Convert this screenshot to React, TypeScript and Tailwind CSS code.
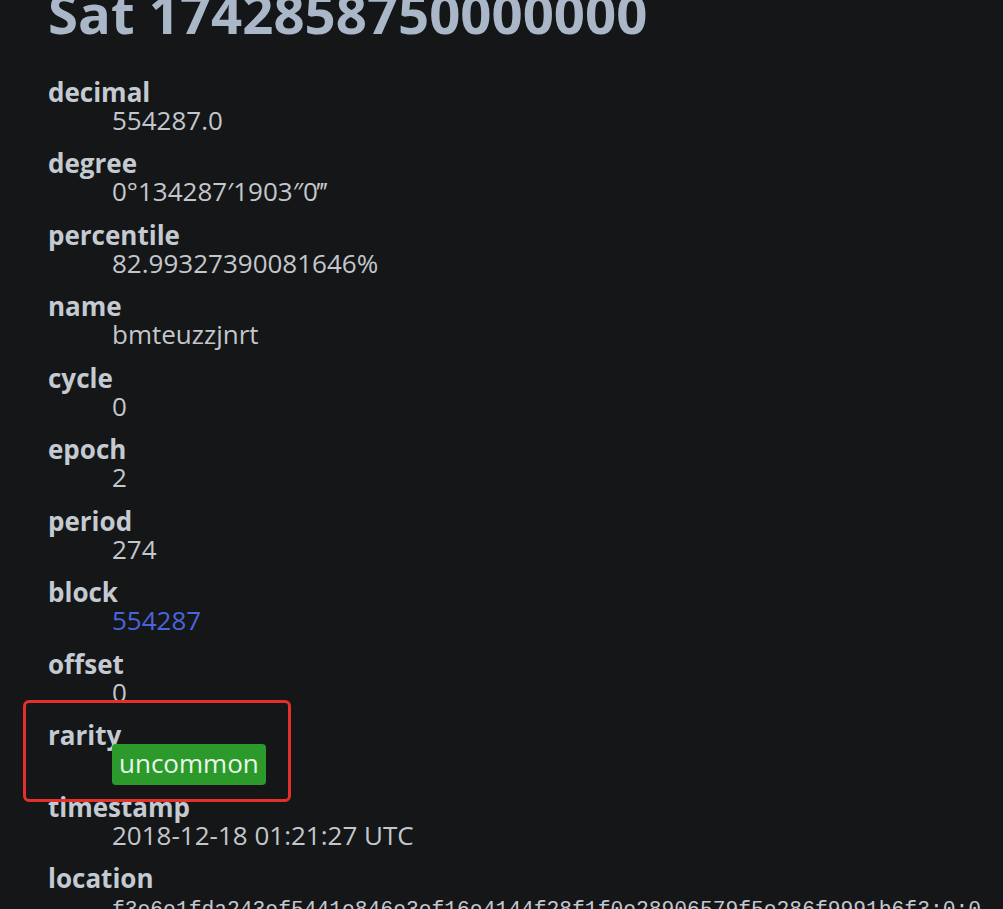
import React from "react";

const rows: { label: string; value: React.ReactNode }[] = [
  { label: "decimal", value: "554287.0" },
  { label: "degree", value: "0°134287′1903″0‴" },
  { label: "percentile", value: "82.99327390081646%" },
  { label: "name", value: "bmteuzzjnrt" },
  { label: "cycle", value: "0" },
  { label: "epoch", value: "2" },
  { label: "period", value: "274" },
  {
    label: "block",
    value: (
      <a href="#" className="text-[#4a64dc]">
        554287
      </a>
    ),
  },
  { label: "offset", value: "0" },
  {
    label: "rarity",
    value: (
      <span className="rounded-[4px] bg-[#2b9a2b] px-[7px] pt-[1px] pb-[4px] text-[#eaf6ea]">
        uncommon
      </span>
    ),
  },
  { label: "timestamp", value: "2018-12-18 01:21:27 UTC" },
  {
    label: "location",
    value: (
      <span className="font-['Liberation_Mono',monospace] text-[21.3px]">
        f3e6e1fda243ef5441e846e3ef16e4144f28f1f0e28906579f5e286f9991b6f3:0:0
      </span>
    ),
  },
];

const App = () => {
  return (
    <main className="relative h-[909px] w-[1003px] overflow-hidden bg-[#151618] pl-[48px] font-['Open_Sans',sans-serif]">
      <h1 className="-mt-[14px] mb-[37px] whitespace-nowrap text-[54.5px] leading-none font-bold text-[#a9b7c8]">
        Sat 1742858750000000
      </h1>

      <dl className="text-[26px] leading-[28px]">
        {rows.map((row) => (
          <div key={row.label} className="mb-[15.5px]">
            <dt className="font-bold text-[#c4cad1]">{row.label}</dt>
            <dd className="ml-[64px] whitespace-nowrap text-[#c3c7cc]">{row.value}</dd>
          </div>
        ))}
      </dl>

      {/* red highlight drawn over the rarity row */}
      <div className="pointer-events-none absolute top-[700px] left-[23px] h-[102px] w-[268px] rounded-[6px] border-[3px] border-[#e3302b]" />
    </main>
  );
};

export default App;
